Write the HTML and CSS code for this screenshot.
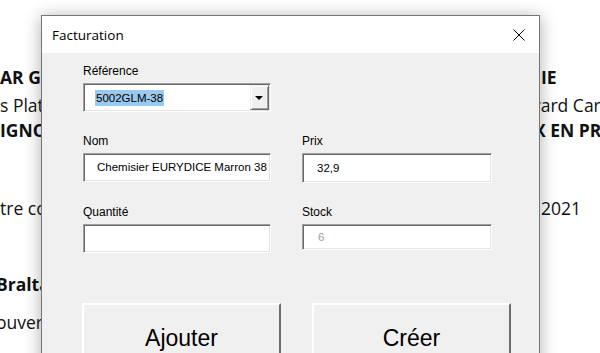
FILE: index.html
```html
<!DOCTYPE html>
<html>
  <head>
    <meta charset="utf-8">
    <title>Facturation</title>
    <link rel="stylesheet" href="styles.css">
  </head>
  <body>
    <div class="doc">
      <div class="line l1"><span class="left b">AR GI</span><span class="right b">IE</span></div>
      <div class="line l2"><span class="left">s Plata</span><span class="right shift">vard Car</span></div>
      <div class="line l3"><span class="left b">IGNO</span><span class="right b shift2">X EN PRO</span></div>
      <div class="line l4"><span class="left">tre co</span><span class="right">2021</span></div>
      <div class="line l5"><span class="left b cut">Braltar</span><span class="right"></span></div>
      <div class="line l6"><span class="left cut">ouver c</span><span class="right"></span></div>
    </div>

    <div class="dialog">
      <div class="titlebar">
        <span class="title">Facturation</span>
        <svg class="close" width="12" height="12" viewBox="0 0 12 12">
          <path d="M0.5 0.5 L11.5 11.5 M11.5 0.5 L0.5 11.5" stroke="#000" stroke-width="1" fill="none"/>
        </svg>
      </div>
      <div class="form">
        <div class="grid">
          <div class="field">
            <label>Référence</label>
            <div class="combo">
              <span class="value"><span class="sel">5002GLM-38</span></span>
              <span class="drop"><span class="arrow"></span></span>
            </div>
          </div>
          <div></div>
          <div class="field">
            <label>Nom</label>
            <div class="input">Chemisier EURYDICE Marron 38</div>
          </div>
          <div class="field">
            <label>Prix</label>
            <div class="input tall">32,9</div>
          </div>
          <div class="field">
            <label>Quantité</label>
            <div class="input"></div>
          </div>
          <div class="field">
            <label>Stock</label>
            <div class="input short disabled">6</div>
          </div>
        </div>
        <div class="buttons">
          <div class="btn">Ajouter</div>
          <div class="btn">Créer</div>
        </div>
      </div>
    </div>
  </body>
</html>
```

FILE: styles.css
```css
html, body {
  margin: 0;
  width: 600px;
  height: 353px;
  overflow: hidden;
  background-color: #fff;
}
body {
  position: relative;
}
.doc {
  padding-top: 65px;
  font-family: "Open Sans", sans-serif;
  font-size: 17.5px;
  line-height: 24px;
  color: #111;
}
.line {
  display: flex;
  white-space: nowrap;
}
.line .left {
  flex: 1;
  overflow: hidden;
}
.line .right {
  width: 68px;
  padding-left: 9px;
  box-sizing: border-box;
  overflow: hidden;
}
.line .right.shift {
  padding-left: 0;
}
.line .right.shift2 {
  padding-left: 2px;
}
.b {
  font-weight: bold;
}
.cut {
  margin-left: -4px;
}
.l2 { margin-top: 4px; }
.l3 { margin-top: 1px; }
.l4 { margin-top: 54px; }
.l5 { margin-top: 52px; }
.l6 { margin-top: 14px; }

/* fenetre */
.dialog {
  position: absolute;
  left: 41px;
  top: 15px;
  width: 499px;
  height: 400px;
  box-sizing: border-box;
  border: 1px solid #767676;
  background-color: #f0f0f0;
  box-shadow: 0 2px 16px rgba(0, 0, 0, 0.32);
}
.titlebar {
  height: 37px;
  background-color: #fff;
  display: flex;
  align-items: center;
  padding: 0 14px 0 10px;
}
.title {
  flex: 1;
  font-family: "Open Sans", sans-serif;
  font-size: 13.5px;
  color: #000;
}
.form {
  padding: 11px 0 0 41px;
  font-family: "Liberation Sans", Arial, sans-serif;
  color: #000;
}
.grid {
  display: grid;
  grid-template-columns: 188px 190px;
  column-gap: 31px;
  row-gap: 22px;
  align-items: start;
}
.field label {
  display: block;
  font-size: 12px;
  line-height: 14px;
  margin-bottom: 5px;
}
.input,
.combo {
  height: 29px;
  box-sizing: border-box;
  background-color: #fff;
  border: 1px solid;
  border-color: #a0a0a0 #fff #fff #a0a0a0;
  box-shadow: inset 1px 1px 0 #696969, inset -1px -1px 0 #e3e3e3;
  font-size: 11.5px;
  display: flex;
  align-items: center;
}
.input {
  padding: 0 0 1px 13px;
}
.input.tall {
  height: 30px;
  padding-left: 14px;
}
.input.short {
  height: 26px;
  padding-left: 15px;
}
.input.disabled {
  color: #a0a0a0;
}
.combo {
  padding: 1px;
}
.combo .value {
  flex: 1;
  padding-left: 10px;
}
.combo .sel {
  background-color: #99c9ef;
  line-height: 16px;
  padding: 0 1px;
  display: inline-block;
}
.combo .drop {
  width: 19px;
  height: 25px;
  box-sizing: border-box;
  background-color: #f0f0f0;
  border: 1px solid;
  border-color: #f0f0f0 #696969 #696969 #f0f0f0;
  box-shadow: inset 1px 1px 0 #fff, inset -1px -1px 0 #a0a0a0;
  display: flex;
  align-items: center;
  justify-content: center;
}
.arrow {
  width: 0;
  height: 0;
  border-left: 4px solid transparent;
  border-right: 4px solid transparent;
  border-top: 4px solid #000;
  margin-right: 1px;
}
.buttons {
  display: flex;
  gap: 31px;
  margin: 50px 0 0 -1px;
}
.btn {
  width: 199px;
  height: 70px;
  box-sizing: border-box;
  border: 2px solid;
  border-color: #fff #6d6d6d #6d6d6d #fff;
  background-color: #f0f0f0;
  font-size: 23px;
  display: flex;
  align-items: center;
  justify-content: center;
}
```
